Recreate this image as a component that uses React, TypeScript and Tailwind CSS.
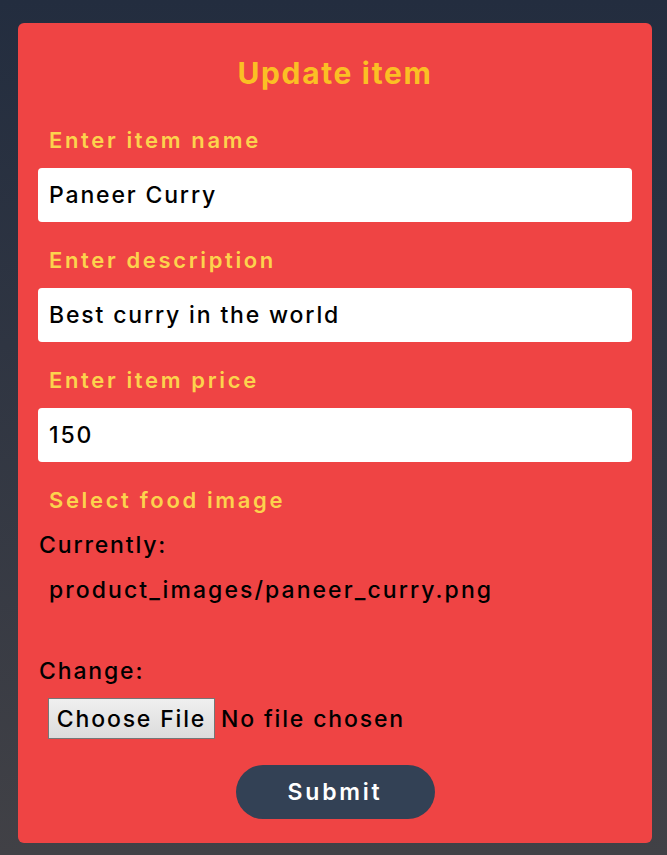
import React from "react";

const font = { fontFamily: "Inter, 'Noto Sans', sans-serif" };

function Label({ children }: { children: React.ReactNode }) {
  return (
    <div className="pl-[11px] h-[28px] leading-[28px] mb-[14px] text-[22px] font-semibold text-[#fcd34d] tracking-[0.12em] whitespace-nowrap">
      {children}
    </div>
  );
}

function Field({ value }: { value: string }) {
  return (
    <div className="h-[54px] bg-white rounded-[4px] flex items-center pl-[11px] pt-[1px] mb-[24px] text-[23px] font-medium text-black tracking-[0.08em]">
      {value}
    </div>
  );
}

export default function App() {
  return (
    <div
      className="min-h-screen bg-gradient-to-b from-[#232d3f] to-[#414146] pt-[23px] pl-[18px] pr-[15px] pb-[12px]"
      style={font}
    >
      <div className="bg-[#ef4444] rounded-[6px] px-[20px] pt-[32px] pb-[24px]">
        <h1 className="text-center text-[30px] leading-[36px] font-bold text-[#fbbf24] mb-[35px] tracking-[0.055em]">
          Update item
        </h1>
        <Label>Enter item name</Label>
        <Field value="Paneer Curry" />
        <Label>Enter description</Label>
        <Field value="Best curry in the world" />
        <Label>Enter item price</Label>
        <Field value="150" />
        <Label>Select food image</Label>
        <div className="mt-[17px] text-[23px] font-medium text-black leading-[28px] tracking-[0.08em] whitespace-nowrap">
          <div className="pl-[1px]">Currently:</div>
          <div className="pl-[11px] mt-[17px] tracking-[0.09em]">product_images/paneer_curry.png</div>
          <div className="pl-[1px] mt-[53px]">Change:</div>
          <div className="flex items-center mt-[13px] pl-[10px] h-[41px]">
            <div className="h-[41px] w-[167px] flex items-center justify-center border border-[#767676] bg-gradient-to-b from-[#efefef] to-[#dcdcdc]">
              Choose File
            </div>
            <span className="ml-[6px]">No file chosen</span>
          </div>
        </div>
        <div className="flex justify-center mt-[26px]">
          <button className="w-[199px] h-[54px] rounded-full bg-[#334155] text-white text-[23px] font-semibold tracking-[0.12em]">
            Submit
          </button>
        </div>
      </div>
    </div>
  );
}
